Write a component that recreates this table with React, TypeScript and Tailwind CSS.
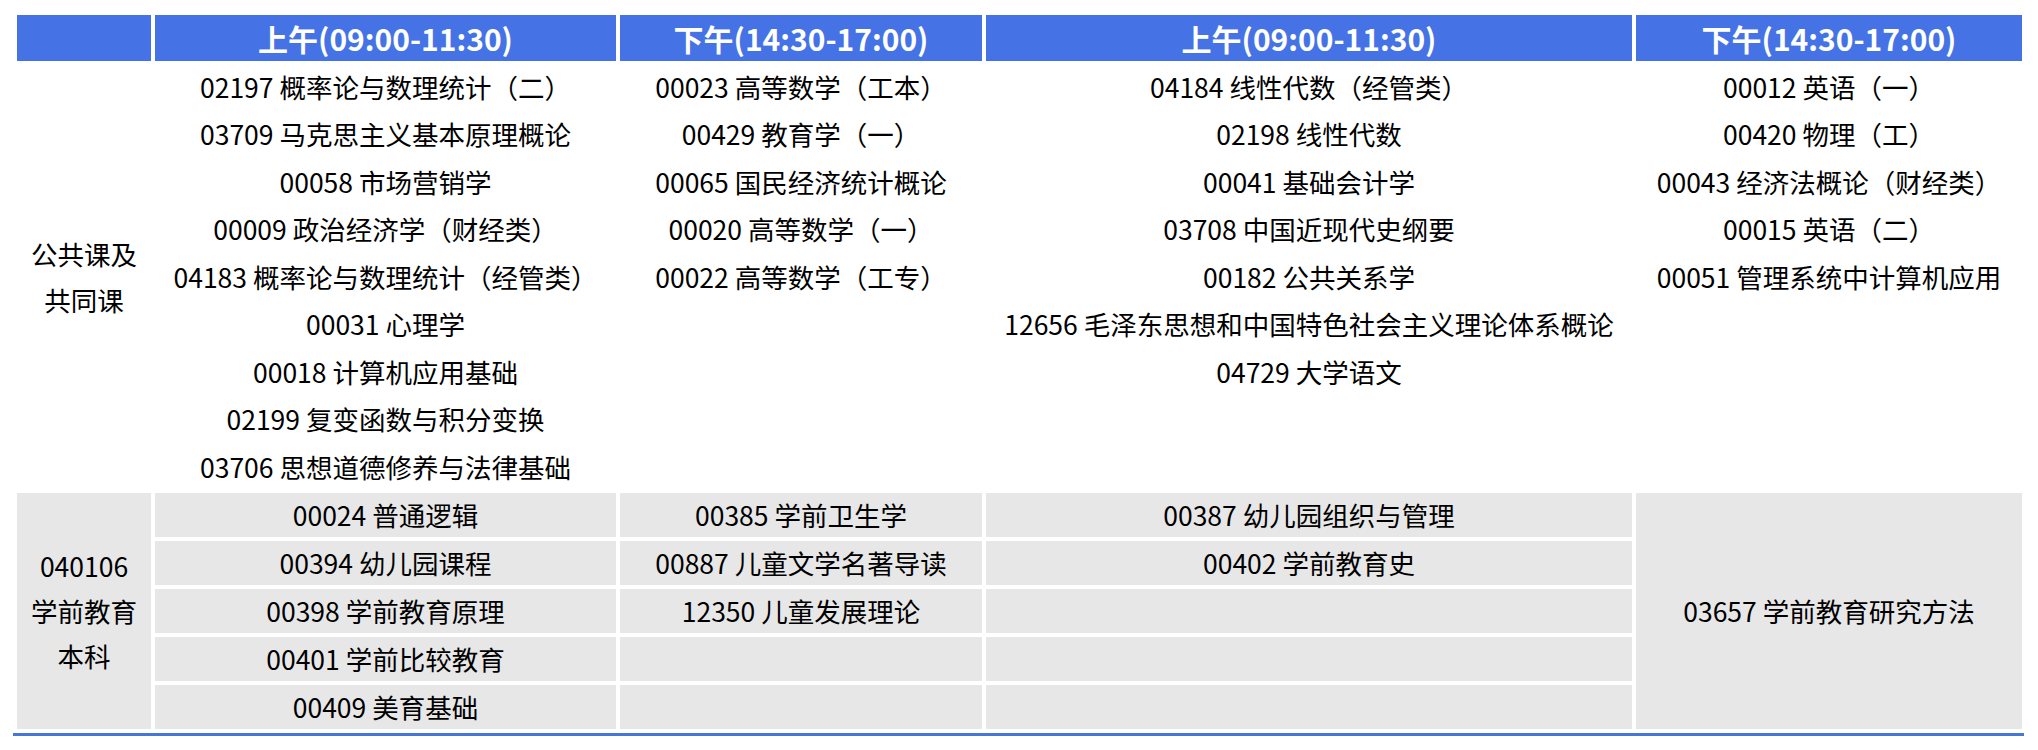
import React from "react";

const top: string[][] = [
  [
    "02197 概率论与数理统计（二）",
    "03709 马克思主义基本原理概论",
    "00058 市场营销学",
    "00009 政治经济学（财经类）",
    "04183 概率论与数理统计（经管类）",
    "00031 心理学",
    "00018 计算机应用基础",
    "02199 复变函数与积分变换",
    "03706 思想道德修养与法律基础",
  ],
  [
    "00023 高等数学（工本）",
    "00429 教育学（一）",
    "00065 国民经济统计概论",
    "00020 高等数学（一）",
    "00022 高等数学（工专）",
  ],
  [
    "04184 线性代数（经管类）",
    "02198 线性代数",
    "00041 基础会计学",
    "03708 中国近现代史纲要",
    "00182 公共关系学",
    "12656 毛泽东思想和中国特色社会主义理论体系概论",
    "04729 大学语文",
  ],
  [
    "00012 英语（一）",
    "00420 物理（工）",
    "00043 经济法概论（财经类）",
    "00015 英语（二）",
    "00051 管理系统中计算机应用",
  ],
];

const bottom: string[][] = [
  ["00024 普通逻辑", "00394 幼儿园课程", "00398 学前教育原理", "00401 学前比较教育", "00409 美育基础"],
  ["00385 学前卫生学", "00887 儿童文学名著导读", "12350 儿童发展理论", "", ""],
  ["00387 幼儿园组织与管理", "00402 学前教育史", "", "", ""],
];

const headers = ["上午(09:00-11:30)", "下午(14:30-17:00)", "上午(09:00-11:30)", "下午(14:30-17:00)"];

export default function App() {
  const cells: React.ReactNode[] = [];
  cells.push(<div key="h0" className="bg-[#4573e5]" />);
  headers.forEach((h, i) => {
    cells.push(
      <div
        key={"h" + (i + 1)}
        className="bg-[#4573e5] text-white font-bold text-[30px] flex items-center justify-center leading-none"
      >
        {h}
      </div>
    );
  });
  cells.push(
    <div key="l1" className="row-span-9 flex items-center justify-center text-center leading-[46px]">
      公共课及
      <br />
      共同课
    </div>
  );
  for (let r = 0; r < 9; r++) {
    for (let c = 0; c < 4; c++) {
      cells.push(
        <div key={`t${r}-${c}`} className="flex items-center justify-center whitespace-nowrap">
          {top[c][r] ?? ""}
        </div>
      );
    }
  }
  cells.push(
    <div key="l2" className="row-span-5 bg-[#e7e7e7] flex items-center justify-center text-center leading-[45px]">
      040106
      <br />
      学前教育
      <br />
      本科
    </div>
  );
  for (let r = 0; r < 5; r++) {
    for (let c = 0; c < 3; c++) {
      cells.push(
        <div key={`b${r}-${c}`} className="bg-[#e7e7e7] flex items-center justify-center whitespace-nowrap">
          {bottom[c][r]}
        </div>
      );
    }
    if (r === 0) {
      cells.push(
        <div key="b-last" className="row-span-5 bg-[#e7e7e7] flex items-center justify-center whitespace-nowrap">
          03657 学前教育研究方法
        </div>
      );
    }
  }

  return (
    <div className="w-[2038px] h-[750px] bg-white font-['Noto_Sans_CJK_SC','Microsoft_YaHei',sans-serif] text-black text-[26.5px]">
      <div className="pt-[15px] pl-[13px]">
        <div className="w-[2011px]">
          <div className="pl-[4px] grid grid-cols-[134px_461px_362px_646px_386px] grid-rows-[46px_repeat(9,43.5px)_repeat(5,44px)] gap-[4px]">
            {cells}
          </div>
          <div className="mt-[4px] h-[3px] bg-[#4776d9]" />
        </div>
      </div>
    </div>
  );
}
